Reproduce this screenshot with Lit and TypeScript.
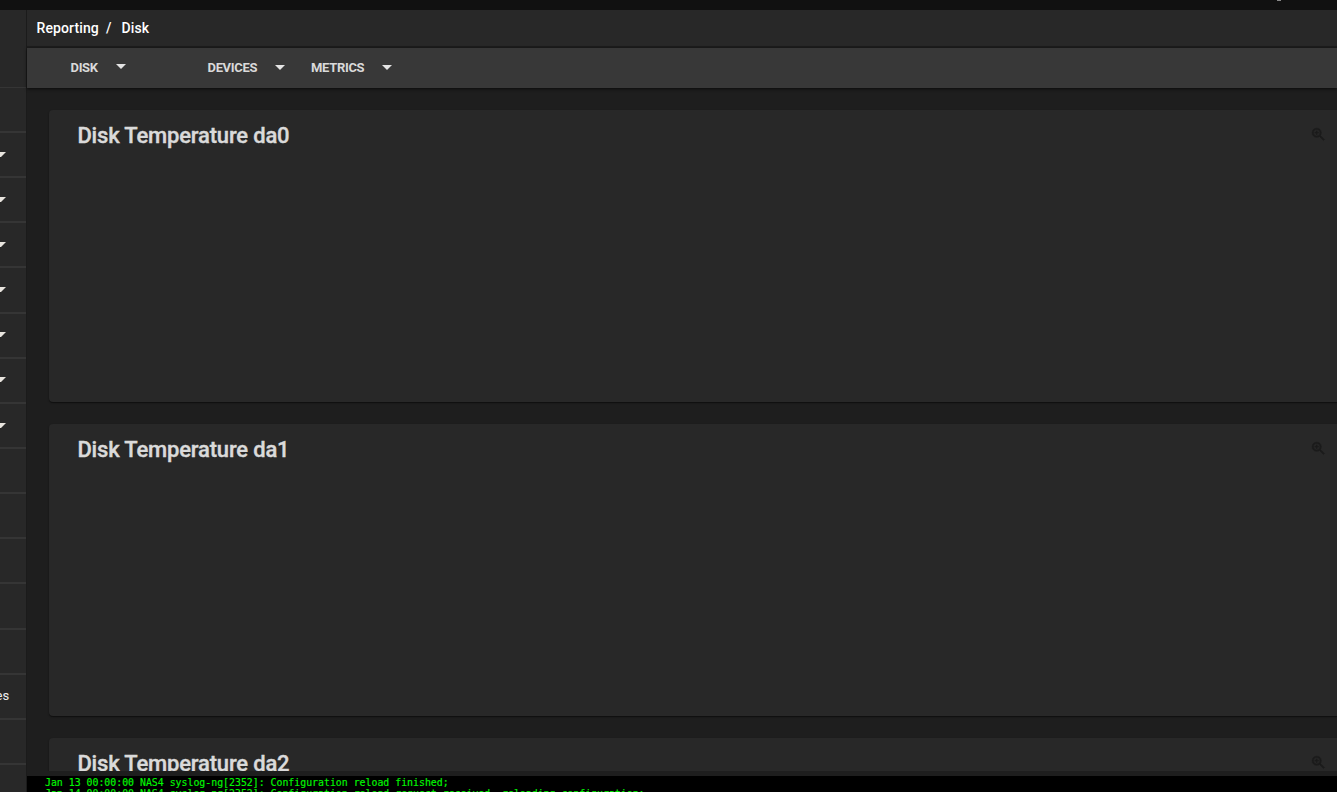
import { LitElement, html, css, nothing } from "lit";
import { customElement, property } from "lit/decorators.js";

@customElement("disk-card")
class DiskCard extends LitElement {
  @property() name = "";
  static styles = css`
    :host { display: block; flex: none; height: 292px; background: #282828; border-radius: 4px 0 0 4px; box-shadow: 0 1px 1px rgba(0,0,0,.4), 0 1px 2px rgba(0,0,0,.2); }
    .head { display: flex; justify-content: space-between; align-items: flex-start; padding: 11px 10px 0 28.4px; }
    h2 { margin: 0; font: 500 22px/29px Roboto, sans-serif; letter-spacing: -0.18px; color: #dadada; -webkit-text-stroke: .4px #dadada; white-space: nowrap; }
    svg { display: block; width: 17px; height: 17px; margin-top: 5px; fill: #1b1b1b; }
  `;
  render() {
    return html`<div class="head">
      <h2>${this.name}</h2>
      <svg viewBox="0 0 24 24"><path d="M15.5 14h-.79l-.28-.27A6.47 6.47 0 0 0 16 9.5 6.5 6.5 0 1 0 9.5 16c1.61 0 3.09-.59 4.23-1.57l.27.28v.79l5 4.99L20.49 19zm-6 0a4.5 4.5 0 1 1 0-9 4.5 4.5 0 0 1 0 9zm2.5-4h-2v2H9v-2H7V9h2V7h1v2h2z" stroke="#1b1b1b" stroke-width=".7"/></svg>
    </div>`;
  }
}

@customElement("app-root")
class AppRoot extends LitElement {
  static styles = css`
    :host { display: flex; flex-direction: column; width: 100%; height: 792px; overflow: hidden; background: #1e1e1e; font-family: Roboto, sans-serif; }
    .top { flex: none; height: 10px; background: #111; display: flex; justify-content: flex-end; }
    .mark { width: 4px; height: 1px; margin-right: 56px; background: #8a8a8a; }
    .body { flex: 1; min-height: 0; display: flex; }
    .side { flex: none; width: 26px; background: #282828; border-right: 1px solid #1b1b1b; overflow: hidden; }
    .first { height: 77px; border-bottom: 1px solid #353535; }
    .row { box-sizing: border-box; height: 45.15px; border-bottom: 2px solid #353535; display: flex; align-items: center; }
    .row svg { display: block; width: 6px; height: 5px; margin-top: -.8px; fill: #e8e4de; }
    .row.short { height: 45px; }
    .row span { font-size: 13px; line-height: 16px; color: #eee; margin-left: -4.5px; }
    .main { flex: 1; min-width: 0; display: flex; flex-direction: column; }
    .crumbs { flex: none; height: 36px; background: #282828; border-bottom: 2px solid #1d1d1d; display: flex; align-items: center; padding-left: 9.5px; color: #fff; font-size: 14px; font-weight: 500; letter-spacing: .11px; }
    .sep { margin: 0 10px 0 7px; }
    .bar { box-sizing: border-box; flex: none; height: 40px; background: #383838; box-shadow: 0 1px 3px rgba(0,0,0,.65); display: flex; align-items: center; padding: 0 0 2px 43.5px; font-size: 13px; font-weight: 700; letter-spacing: -.32px; color: #dadada; }
    .menu { display: flex; align-items: center; justify-content: space-between; }
    .m0 { width: 55.5px; margin-right: 81.5px; }
    .m1 { width: 77.5px; margin-right: 26px; }
    .m2 { width: 81px; }
    .menu svg { display: block; width: 10px; height: 5px; fill: #e4e4e4; }
    .m0 svg { margin-bottom: 2px; }
    .cards { flex: 1; min-height: 0; overflow: hidden; margin-bottom: 5px; padding: 22px 0 0 22px; display: flex; flex-direction: column; gap: 22px; }
    .console { flex: none; height: 16px; overflow: hidden; background: #000; color: #00f800; padding-left: 18px; font: 9.87px/11px "DejaVu Sans Mono", monospace; -webkit-text-stroke: .15px #00f800; white-space: pre; }
    .console div { height: 11px; }
    .console div:first-child { padding-top: 1px; }
  `;
  render() {
    const rows = Array.from({ length: 16 }, (_, i) => i);
    const menus = ["DISK", "DEVICES", "METRICS"];
    return html`
      <div class="top"><div class="mark"></div></div>
      <div class="body">
        <div class="side">
          <div class="first"></div>
          ${rows.map((i) => html`<div class="row ${i === 0 ? "short" : ""}">
            ${i >= 1 && i <= 7 ? html`<svg viewBox="0 0 6 5"><path d="M0 0h6L1 5H0z"/></svg>` : nothing}
            ${i === 13 ? html`<span>es</span>` : nothing}
          </div>`)}
        </div>
        <div class="main">
          <div class="crumbs"><span>Reporting</span><span class="sep">/</span><span>Disk</span></div>
          <div class="bar">
            ${menus.map((m, i) => html`<div class="menu m${i}"><span>${m}</span><svg viewBox="0 0 10 5"><path d="M0 0h10L5 5z"/></svg></div>`)}
          </div>
          <div class="cards">
            ${["da0", "da1", "da2"].map((d) => html`<disk-card .name=${"Disk Temperature " + d}></disk-card>`)}
          </div>
          <div class="console"><div>Jan 13 00:00:00 NAS4 syslog-ng[2352]: Configuration reload finished;</div><div>Jan 14 00:00:00 NAS4 syslog-ng[2352]: Configuration reload request received, reloading configuration;</div></div>
        </div>
      </div>`;
  }
}
